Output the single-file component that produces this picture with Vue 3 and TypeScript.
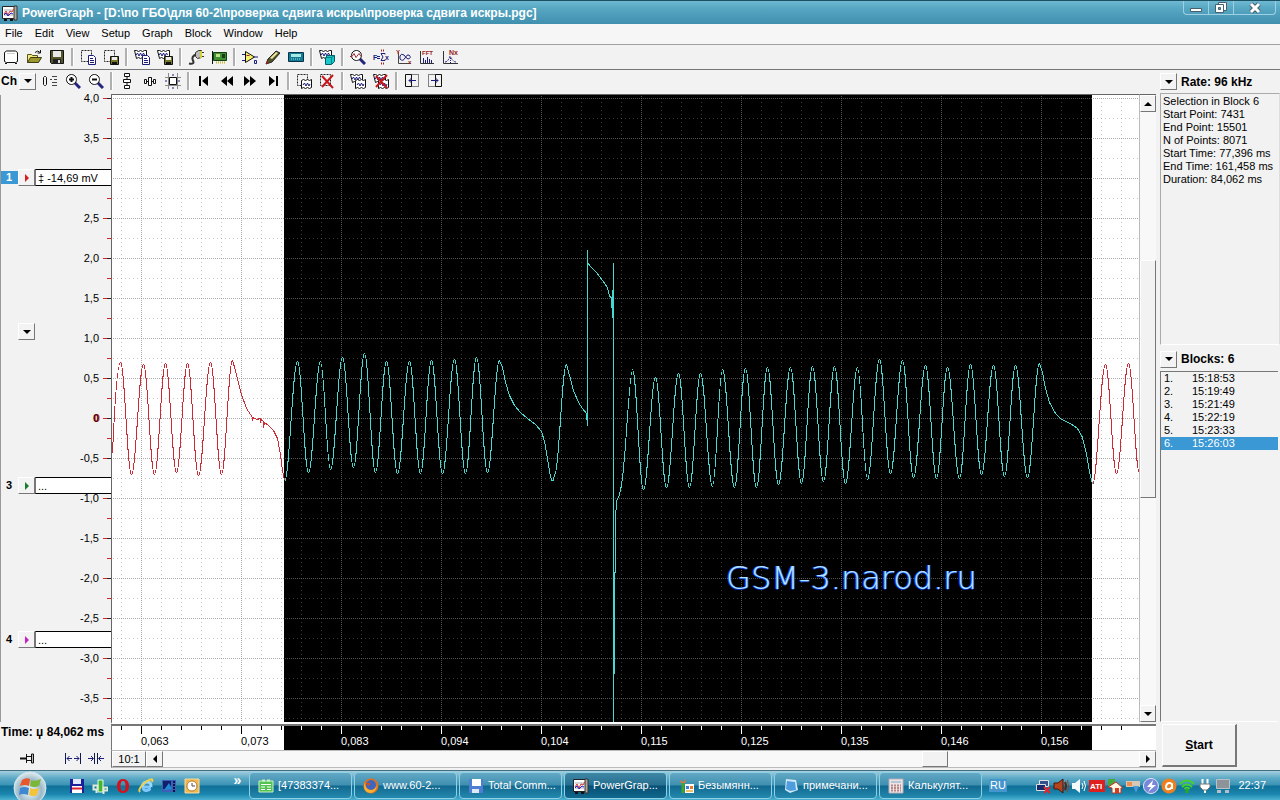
<script setup lang="ts">
import { h, ref } from 'vue'

type Shape = { d?: string; f?: string; s?: string; w?: number; dash?: string; t?: string; x?: number; y?: number; z?: number }

const K = '#111'
const NAVY = '#1c1c7a'
const dashedBox: Shape = { d: 'M1.5 1.5h10v11h-10z', s: '#222', dash: '2 1' }
const smallPage: Shape[] = [
  { d: 'M8.5 6.5h5l2 2v7h-7z', f: '#fff', s: NAVY },
  { d: 'M10 9.5h3M10 11.5h4M10 13.5h4', s: NAVY },
]
const smallDisk: Shape[] = [
  { d: 'M7.5 7.5h8v8h-8z', f: '#77772c', s: K },
  { d: 'M9 8h5v3H9z', f: '#eee' },
  { d: 'M9 13h5v3H9z', f: K },
]
const waves: Shape[] = [
  { d: 'M.5 1.5h2l2 1 2-1 2 1 2-1h2v8h-2l-2-1-2 1-2-1-2 1z', f: '#fff', s: K },
  { d: 'M2 6l1.500-2L5 7l1.500-3L8 7l1.500-3 1 2', s: NAVY },
]
const waveFront: Shape[] = [
  { d: 'M5.5 7.5l2-1 2 1 2-1 2 1 2-1v8l-2 1-2-1-2 1-2-1-2 1z', f: '#fff', s: K },
  { d: 'M7 12l1.5-2 1.5 3 1.5-3 1.5 3 1-2', s: NAVY },
]
const redCross: Shape = { d: 'M3 3l11 12M14 2L3 14', s: '#c8161d', w: 2 }
const lens: Shape[] = [
  { d: 'M10 10l5 5', s: '#25257f', w: 3 },
  { d: 'M6.5 1.5a5 5 0 1 1-.1 0z', f: '#fff', s: K },
]
const chart: Shape[] = [
  { d: 'M.5 1.5h13v12H.5z', f: '#fff', s: '#222' },
  { d: 'M12 1h3v14h-3z', f: '#b0a79b', s: '#333' },
  { d: 'M2 5h9M2 10h9', s: '#aaa' },
  { d: 'M2 9l2-3 2 4 2-4 2 1 2-3', s: '#c33' },
  { d: 'M2 10l2-2 2 3 3-3 2 1', s: '#22c' },
  { d: 'M2 15h3M8 15h3', s: K, w: 2 },
]

const icons: Record<string, Shape[]> = {
  new: [{ d: 'M1.5 3.5l2-1.500h9l2 1.500v9l-2 1h-9l-2-1z', f: '#fff', s: K, w: 1 }, { d: 'M2 14.500h2M12 14.500h2', s: K }, { d: 'M4 4.500h8', s: '#ccc' }],
  open: [
    { d: 'M1.500 13.500v-8h4l1 1h5v3', f: '#f3e97a', s: '#55551a' },
    { d: 'M1.500 13.500l3-5h11l-3 5z', f: '#9c982f', s: '#3d3d10' },
    { d: 'M9 3.500q3-3 5 0M14.500 1v3h-3', s: K },
  ],
  save: [
    { d: 'M1.500 1.500h13v13h-12l-1-1z', f: '#55552a', s: K },
    { d: 'M4 2h8v6H4z', f: '#e8e8e8' },
    { d: 'M4 10h8v5H4z', f: '#222' },
    { d: 'M9 11h2v3H9z', f: '#ddd' },
  ],
  copyPage: [dashedBox, ...smallPage],
  copyDisk: [dashedBox, ...smallDisk],
  wavePage: [...waves, ...smallPage],
  waveDisk: [...waves, ...smallDisk],
  plug: [
    { d: 'M1 14.500q6 1 4-3t3-6', s: '#333', w: 2 },
    { d: 'M7.500 3.500l3-2h3v7l-4 1-2-2z', f: '#bbb', s: '#333' },
    { d: 'M12 2h2v7h-2z', f: '#d6d232' },
    { d: 'M14 3.500h2M14 7.500h2', s: '#333' },
  ],
  board: [
    { d: 'M1.500 2v13', s: K },
    { d: 'M2.500 3.500h13v8h-13z', f: '#3f8f33', s: '#153f12' },
    { d: 'M5 5h4v3H5z', f: '#c3e08c' },
    { d: 'M11 5h3v4h-3z', f: '#183c17' },
    { d: 'M5 13.500h9', s: '#c5b62b', w: 2, dash: '1 1' },
  ],
  amp: [
    { d: 'M3.500 2.500l9 5.500-9 5.500z', f: '#f7f06a', s: K },
    { d: 'M0 5.500h3M0 11.500h3M12 8h4', s: NAVY },
    { d: 'M4.500 6.500h3', s: '#922' },
    { d: 'M12.500 11.500h2v3h-2z', s: NAVY },
  ],
  pencil: [
    { d: 'M1 15l2-5 8-8 4 2-8 9z', f: '#55532a', s: '#222' },
    { d: 'M5 9l6-6 2 1-6 6z', f: '#eee49a' },
    { d: 'M1 15l1-3 2 2z', f: '#a22' },
  ],
  device: [
    { d: 'M.5 3.500h15v9H.5z', f: '#137b91', s: '#08324b' },
    { d: 'M3 5h10v3H3z', f: '#a6e9e5' },
    { d: 'M3 10h10', s: '#9de', dash: '1 1' },
  ],
  cube: [...waves, { d: 'M6.500 8.500l2-2h7v6l-3 3h-6z', f: '#19c7cd', s: '#075a66' }, { d: 'M7 8.500h5.500V15M12.500 8.500l3-2', s: '#087' }],
  lensWave: [...lens, { d: 'M0 7.500h2l2-3 2 4 3-4 2 3', s: '#a22735' }],
  sum: [
    { t: 'F', x: 0, y: 11, z: 7, f: NAVY },
    { d: 'M4 7.500h3M4 9.500h3', s: NAVY },
    { d: 'M12 5.500v-1H8l2 3.500-2 3.500h4v-1', s: NAVY },
    { t: 'x', x: 12, y: 11, z: 7, f: NAVY },
    { d: 'M8 1.500h4M8 14.500h4', s: '#a22', w: 2, dash: '1 1' },
  ],
  xy: [
    { d: 'M2.500 3v11.500H15', s: '#444' },
    { d: 'M4 10q3 3 5-1t4-3q3 3-1 4-2-1-4-4-3-2-4 1z', s: NAVY },
    { t: 'Y', x: 0, y: 5, z: 6, f: '#922' },
    { t: 'x', x: 12, y: 15, z: 6, f: '#922' },
  ],
  fft: [
    { d: 'M1.500 2v12.500H15', s: '#333' },
    { t: 'FFT', x: 3, y: 6, z: 6, f: '#922' },
    { d: 'M4.500 9v5M6.500 11v3M8.500 8v6M10.500 10v4M12.500 11v3', s: NAVY },
  ],
  nx: [
    { d: 'M1.500 2v12.500H16', s: '#333' },
    { t: 'Nx', x: 7, y: 6, z: 7, f: '#922' },
    { d: 'M3 13q3 0 5-6 3 6 6 6', s: NAVY, dash: '2 1' },
    { d: 'M8.500 9v5', s: NAVY, dash: '1 1' },
  ],
  zero: [
    { d: 'M2.500 3.500h1l1 1v7l-1 1h-1l-1-1v-7z', s: K },
    { d: 'M10 3.500h5M8 6.500h2M12 6.500h3M10 9.500h5M10 12.500h5', s: '#444' },
  ],
  zoomIn: [...lens, { d: 'M4 6.500h5M6.500 4v5', s: K, w: 2 }],
  zoomOut: [...lens, { d: 'M4 6.500h5', s: K, w: 2 }],
  fitV: [{ d: 'M5.500.5h5v3h-5zM4.500 6.500h7v3h-7zM5.500 12.500h5v3h-5z', f: '#fff', s: K }, { d: 'M8 3v3M8 10v2', s: K }],
  fitH: [{ d: 'M6.500 4.500h3v8h-3z', f: '#fff', s: K }, { d: 'M2.500 6.500h2v4h-2zM11.500 6.500h2v4h-2z', f: '#fff', s: K }, { d: 'M4 8.500h2M10 8.500h2', s: K }],
  fitBox: [{ d: 'M3.500 0v16M12.500 0v16M0 4.500h16M0 12.500h16', s: '#8a8a8a' }, { d: 'M4.500 4.500h7v7h-7z', f: '#fff', s: K }, { d: 'M8 1v2M8 14v2M0 8h2M13 8h2', s: NAVY }],
  first: [{ d: 'M3 3h2v10H3zM12 3v10L6 8z', f: '#000' }],
  back: [{ d: 'M8 3v10L2 8zM14 3v10L8 8z', f: '#000' }],
  forward: [{ d: 'M2 3v10l6-5zM8 3v10l6-5z', f: '#000' }],
  last: [{ d: 'M4 3v10l6-5zM11 3h2v10h-2z', f: '#000' }],
  selWave: [dashedBox, ...waveFront],
  selCross: [dashedBox, redCross],
  twoWaves: [...waves, ...waveFront],
  waveCross: [...waves, ...waveFront, redCross],
  boxLeft: [{ d: 'M1.500 1.500h6v12h-6z', s: K }, { d: 'M7.500 1.500h7v12h-7z', s: K, dash: '1 1' }, { d: 'M12 7.500H5M7.500 5L5 7.500 7.500 10', s: NAVY }],
  boxRight: [{ d: 'M8.500 1.500h6v12h-6z', s: K }, { d: 'M1.500 1.500h7v12h-7z', s: K, dash: '1 1' }, { d: 'M4 7.500h7M8.500 5L11 7.500 8.500 10', s: NAVY }],
  pin: [{ d: 'M0 8.500h6', s: K, w: 2 }, { d: 'M6.500 4v9M7 6.500h5M7 10.500h5M13.500 4v9h-2v-9z', f: '#bbb', s: K }],
  spread: [{ d: 'M.5 3v11M15.500 3v11', s: '#111a4a' }, { d: 'M2 8.500h5M4.500 6L2 8.500 4.500 11M9 8.500h5M11.500 6L14 8.500 11.500 11', s: NAVY }],
  shrink: [{ d: 'M6.500 3v11M9.500 3v11', s: '#111a4a' }, { d: 'M0 8.500h5M3 6l2.500 2.500L3 11M16 8.500h-5M13 6l-2.500 2.500L13 11', s: NAVY }],
  chart,
  tcDisk: [{ d: 'M1 1h14v14H1z', f: '#1a1f9c' }, { d: 'M4 1h8v5H4z', f: '#dfe6ff' }, { d: 'M3 8h10v7H3z', f: '#fff' }, { d: 'M3 10.500h10', s: '#d23', w: 2 }],
  qip: [{ d: 'M6 2h5v12H6z', f: '#46b52e', s: '#dfe' }, { d: 'M1.500 7.500h4v4h-4zM4.500 12v3M11.500 9.500h4v3h-4zM11.500 13v3', s: '#dfead8', w: 2 }],
  opera: [{ d: 'M8 1c4 0 6 3 6 7s-2 7-6 7-6-3-6-7 2-7 6-7zM8 3c-2 0-2.500 2-2.500 5S6 13 8 13s2.500-2 2.500-5S10 3 8 3z', f: '#d3121b' }],
  ie: [{ d: 'M13 9H5q0 4 4 3.500 2 0 3-2', s: '#7cc8ff', w: 3 }, { d: 'M4.500 9q0-5 4.500-5t4 5', s: '#9ad8ff', w: 3 }, { d: 'M2 14Q-1 11 9 3q7-4 5 1', s: '#f0cf49', w: 2 }],
  movie: [{ d: 'M1 2h14v12H1z', f: '#3d5fb5' }, { d: 'M2 3h8v8H2z', f: '#12206b' }, { d: 'M3 12l5-7 3 6', f: '#1c8cd3' }, { d: 'M13 3v11', s: '#0b1642', w: 2, dash: '2 1' }],
  clock: [{ d: 'M1 1h14v14H1z', f: '#f3b54c', s: '#f9dca3' }, { d: 'M8 3a5 5 0 1 1-.1 0z', f: '#fff', s: '#a8762b' }, { d: 'M8 5v3h3', s: '#644' }],
  greenNote: [{ d: 'M1 3h14v11H1z', f: '#53c451', s: '#c9f4c3' }, { d: 'M4 2.500h3M9 2.500h3', s: '#c9f4c3', w: 2 }, { d: 'M3 6.500h10M3 9h4M9 9h4M3 11.500h4M9 11.500h4', s: '#fff' }],
  firefox: [{ d: 'M8 .5a7.500 7.500 0 1 1-.1 0z', f: '#e0701b' }, { d: 'M8 2a5 5 0 1 1-.1 0z', f: '#3c66c4' }, { d: 'M2 4q0 8 6 8 4 0 6-5-1 8-7 8-6-1-6-7z', f: '#f9b233' }, { d: 'M3 5q3-1 5 1l-3 2z', f: '#d2501a' }],
  floppy: [{ d: 'M1 1h14v14H1z', f: '#4d7ed2' }, { d: 'M4 1h9v7H4z', f: '#fff' }, { d: 'M4 11h7v4H4z', f: '#dfe8f7' }],
  paint: [{ d: 'M5 5v10', s: '#3fa532', w: 3 }, { d: 'M2 2l3 2 3-3-1 4H3z', f: '#e8772d' }, { d: 'M7 6h9v9H7z', f: '#fff' }, { d: 'M8 8h3v3H8z', f: '#3e7ad7' }, { d: 'M12 8h3v3h-3z', f: '#e9782d' }, { d: 'M8 12h7v2H8z', f: '#f0c069' }],
  notes: [{ d: 'M3 1l10 1 2 10-8 3-5-3z', f: '#cfeaf8' }, { d: 'M4 3l8 1 1 8-6 1-4-2z', f: '#4f9dde' }],
  calc: [{ d: 'M1 1h14v14H1z', f: '#ece5e5', s: '#b9aebb' }, { d: 'M3 3h10v2H3z', f: '#b9c3d6' }, { d: 'M3 7.500h10M3 10h10M3 12.500h10', s: '#b98484', w: 2, dash: '2 1' }],
  net: [{ d: 'M4.500 2.500h9v6h-9z', f: '#36508c', s: '#e4e4e4' }, { d: 'M1.500 6.500h9v6h-9z', f: '#142a6b', s: '#dcdcdc' }, { d: 'M9 9l6 6M15 9l-6 6', s: '#e3242b', w: 2 }],
  speaker: [{ d: 'M1 5h4l5-4v14l-5-4H1z', f: '#b5431c', s: '#4b1608' }, { d: 'M12 4q2 4 0 8', s: '#5d2313', w: 2 }, { d: 'M14.500 2q2 6 0 12', s: '#8b4a36' }],
  volume: [{ d: 'M1 5h3l5-4v14l-5-4H1z', f: '#f4fafc' }, { d: 'M11 5q2 3 0 6M13 3q3 5 0 10', s: '#fff' }],
  ati: [{ d: 'M0 2h16v12H0z', f: '#de1f1d' }, { t: 'ATI', x: 1, y: 11, z: 8, f: '#fff' }],
  house: [{ d: 'M1 1h7v7H1z', f: '#4aa63b' }, { d: 'M1 9l8-5 7 6h-2v5H5v-5z', f: '#fff7e3', s: '#c13225' }, { d: 'M8 10h4v5H8z', f: '#d23c25' }],
  update: [{ d: 'M1 3h14v6H1z', f: '#d6c8b6' }, { d: 'M2 4h5v4H2z', f: '#f08d51' }, { d: 'M8 8h6l-3 7z', f: '#4a97dc' }],
  bolt: [{ d: 'M8 .5a7.500 7.500 0 1 1-.1 0z', f: '#7887d8', s: '#e0e5fa' }, { d: 'M10 2L4 9h4l-3 5 8-7H9z', f: '#fff' }],
  avast: [{ d: 'M8 .5a7.500 7.500 0 1 1-.1 0z', f: '#ee7f1e' }, { d: 'M11 11V6q-3-2-5 0-2 3 0 5 3 1 5-2', s: '#fff', w: 2 }],
  wifi: [{ d: 'M1 6q7-7 14 0M3 9q5-5 10 0M5.500 11q2.500-3 5 0', s: '#43d12d', w: 2 }, { d: 'M8 11v4', s: '#2caa1d', w: 3 }],
  socket: [{ d: 'M5.500 1v5M10.500 1v5M8 11v4', s: '#fff', w: 2 }, { d: 'M3 6h10v3l-3 3H6L3 9z', f: '#fff', s: '#777' }],
  display: [{ d: 'M1.500 1.500h13v9h-13z', f: '#8d9499', s: '#b9c2c8' }, { d: 'M2 12h4v3H2zM10 12h4v3h-4z', f: '#b5bfc5' }],
}

const Icon = (props: { name: string }) =>
  h(
    'svg',
    { class: 'icon', viewBox: '0 0 16 16', width: 16, height: 16, 'aria-hidden': 'true' },
    icons[props.name].map((s) =>
      s.t
        ? h('text', { x: s.x, y: s.y, 'font-size': s.z, 'font-weight': 'bold', fill: s.f }, s.t)
        : h('path', { d: s.d, fill: s.f ?? 'none', stroke: s.s, 'stroke-width': s.w ?? 1, 'stroke-dasharray': s.dash }),
    ),
  )
Icon.props = ['name']

const menus = ['File', 'Edit', 'View', 'Setup', 'Graph', 'Block', 'Window', 'Help']
const mainTools = [
  ['new', 'open', 'save'],
  ['copyPage', 'copyDisk'],
  ['wavePage', 'waveDisk'],
  ['plug', 'board'],
  ['amp', 'pencil', 'device'],
  ['cube'],
  ['lensWave', 'sum', 'xy', 'fft', 'nx'],
]
const viewTools = [
  ['zero', 'zoomIn', 'zoomOut'],
  ['fitV', 'fitH', 'fitBox'],
  ['first', 'back', 'forward', 'last'],
  ['selWave', 'selCross'],
  ['twoWaves', 'waveCross'],
  ['boxLeft', 'boxRight'],
]

const W = 1027
const H = 627
const X0 = 112
const Y0 = 95
const px = (x: number) => `${((x - X0) / W) * 100}%`
const py = (y: number) => `${((y - Y0) / H) * 100}%`

const levels = Array.from({ length: 16 }, (_, i) => {
  const value = 4 - i * 0.5
  return { y: 98 + i * 40, label: value === 0 ? '0' : value.toFixed(1).replace('.', ','), zero: value === 0 }
})
const minorY = Array.from({ length: 16 }, (_, i) => 118 + i * 40)
const majorX = Array.from({ length: 10 }, (_, i) => 141 + i * 100)
const minorX = Array.from({ length: 51 }, (_, i) => 121 + i * 20).filter((x) => (x - 141) % 100 !== 0)
const times = ['0,063', '0,073', '0,083', '0,094', '0,104', '0,115', '0,125', '0,135', '0,146', '0,156']

type Pt = [number, number]
const wave = (pts: Pt[]) =>
  pts
    .slice(1)
    .map(([x, y], i) => {
      const [a, b] = pts[i]
      const k = (x - a) * 0.38
      return `C${a + k} ${b} ${x - k} ${y} ${x} ${y}`
    })
    .join('')
const line = (pts: Pt[]) => pts.map(([x, y]) => `L${x} ${y}`).join('')

const redLeft =
  'M112 453Q116 362 120 362' +
  wave([[120, 362], [131, 474], [143, 364], [154, 474], [165, 363], [176, 472], [187, 363], [198, 475], [210, 362], [221, 474], [232, 360]]) +
  line([[235, 370], [238, 383], [241, 394], [246, 408], [252, 417], [252, 420], [253, 417], [256, 419], [260, 418], [260, 422], [261, 419], [263, 421], [263, 427], [264, 422], [268, 425], [273, 430], [277, 438], [280, 454], [282, 470], [284, 480]])
const redRight = 'M1092 484' + wave([[1092, 484], [1105, 364], [1116, 473], [1128, 363], [1139, 473]])
const cyan =
  'M284 481' +
  wave([[284, 481], [297, 361], [308, 472], [320, 361], [330, 469], [342, 357], [353, 467], [364, 353], [375, 472], [386, 361], [397, 473], [409, 361], [420, 473], [431, 360], [442, 473], [454, 359], [465, 473], [476, 357], [487, 472], [499, 360]]) +
  line([[502, 367], [505, 382], [509, 395], [514, 405], [520, 412], [527, 418], [535, 424], [541, 431], [544, 441], [547, 458], [549, 471]]) +
  'Q552 488 554 474' +
  wave([[554, 474], [566, 364]]) +
  line([[569, 375], [573, 390], [578, 402], [582, 408], [586, 413], [587, 425], [587, 249], [587, 262], [590, 266], [596, 272], [602, 280], [607, 287], [609, 296], [611, 297], [612, 317], [612, 290], [613, 317], [613, 262], [613, 722], [614, 626], [615, 520], [616, 500], [618, 497], [620, 490], [622, 478], [625, 445]]) +
  'Q630 369 632 369' +
  wave([[632, 369], [643, 489], [655, 377], [666, 487], [678, 373], [689, 487], [700, 373], [712, 486], [722, 369], [734, 487], [745, 368], [756, 487], [767, 367], [778, 484], [790, 367], [801, 483], [812, 366], [823, 481], [834, 366], [845, 483], [857, 367], [867, 479], [879, 359], [890, 473], [902, 360], [913, 477], [925, 365], [936, 478], [947, 367], [959, 478], [970, 364], [981, 474], [993, 365], [1004, 476], [1015, 365], [1027, 477], [1039, 363]]) +
  line([[1042, 372], [1045, 388], [1049, 402], [1055, 413], [1061, 419], [1070, 423], [1077, 428], [1082, 437], [1086, 453], [1089, 471], [1092, 484]])

const channels = [
  { no: 1, y: 177, color: '#d61c1c', value: '‡ -14,69 mV' },
  { no: 3, y: 485, color: '#187d2c', value: '...' },
  { no: 4, y: 639, color: '#c420c8', value: '...' },
]
const activeChannel = ref(1)

const info = [
  'Selection in Block 6',
  'Start Point: 7431',
  'End Point: 15501',
  'N of Points: 8071',
  'Start Time: 77,396 ms',
  'End Time: 161,458 ms',
  'Duration: 84,062 ms',
]
const blocks = ['15:18:53', '15:19:49', '15:21:49', '15:22:19', '15:23:33', '15:26:03']
const activeBlock = ref(5)

const quick = ['tcDisk', 'qip', 'opera', 'ie', 'movie', 'clock']
const tasks = [
  { icon: 'greenNote', text: '[47383374...' },
  { icon: 'firefox', text: 'www.60-2...' },
  { icon: 'floppy', text: 'Total Comm...' },
  { icon: 'chart', text: 'PowerGrap...', active: true },
  { icon: 'paint', text: 'Безымянн...' },
  { icon: 'notes', text: 'примечани...' },
  { icon: 'calc', text: 'Калькулят...' },
]
const tray = ['net', 'speaker', 'volume', 'ati', 'house', 'update', 'bolt', 'avast', 'wifi', 'socket', 'display']
</script>

<template>
  <div class="desktop">
    <header class="title">
      <Icon name="chart" />
      <h1>PowerGraph - [D:\по ГБО\для 60-2\проверка сдвига искры\проверка сдвига искры.pgc]</h1>
      <div class="win-buttons">
        <button aria-label="Minimize">
          <svg viewBox="0 0 14 12" width="14" height="12"><path d="M1.500 6.500h11v3h-11z" fill="#fff" stroke="#47606e" /></svg>
        </button>
        <button aria-label="Restore">
          <svg viewBox="0 0 14 12" width="14" height="12">
            <path d="M4.500.5h8v8h-8z" fill="#fff" stroke="#47606e" />
            <path d="M1.500 2.500h8v8h-8z" fill="#fff" stroke="#47606e" />
            <path d="M4.500 5.500h2v2h-2z" fill="#5aa5c0" stroke="#47606e" />
          </svg>
        </button>
        <button class="close" aria-label="Close">
          <svg viewBox="0 0 14 12" width="14" height="12">
            <path d="M3 2l8 8M11 2l-8 8" stroke="#47606e" stroke-width="5" />
            <path d="M3 2l8 8M11 2l-8 8" stroke="#fff" stroke-width="3" />
          </svg>
        </button>
      </div>
    </header>

    <nav class="menu">
      <button v-for="m in menus" :key="m">{{ m }}</button>
    </nav>

    <div class="tools main-tools">
      <div v-for="(group, i) in mainTools" :key="i" class="group">
        <button v-for="t in group" :key="t" :aria-label="t"><Icon :name="t" /></button>
      </div>
    </div>

    <div class="body">
      <main class="work">
        <div class="tools view-tools">
          <b class="ch">Ch</b>
          <button class="raised" aria-label="Channel menu"><i class="arrow down"></i></button>
          <div v-for="(group, i) in viewTools" :key="i" class="group">
            <button v-for="t in group" :key="t" :aria-label="t"><Icon :name="t" /></button>
          </div>
        </div>

        <section class="axis">
          <svg class="scale" :viewBox="`0 ${Y0} 8 ${H}`" preserveAspectRatio="none" shape-rendering="crispEdges">
            <g v-for="l in levels" :key="l.y">
              <path :d="`M0 ${l.y + 0.5}h8`" stroke="#d22" />
              <path :d="`M4 ${l.y + 0.5}h4`" stroke="#222" />
            </g>
            <path v-for="y in minorY" :key="y" :d="`M4 ${y + 0.5}h4`" stroke="#d22" />
          </svg>
          <span v-for="l in levels" :key="l.y" class="level" :class="{ zero: l.zero }" :style="{ top: py(l.y) }">{{ l.label }}</span>
          <button class="raised axis-menu" aria-label="Axis menu" :style="{ top: py(331) }"><i class="arrow down"></i></button>
          <div v-for="c in channels" :key="c.no" class="channel" :style="{ top: py(c.y) }">
            <label :for="`channel-${c.no}`" :class="{ active: c.no === activeChannel }">{{ c.no }}</label>
            <button class="raised" :aria-label="`Channel ${c.no}`" @click="activeChannel = c.no">
              <i class="arrow right" :style="{ color: c.color }"></i>
            </button>
            <input :id="`channel-${c.no}`" type="text" :value="c.value" readonly />
          </div>
        </section>

        <section class="plot">
          <svg :viewBox="`${X0} ${Y0} ${W} ${H}`" preserveAspectRatio="none">
            <rect :x="X0" :y="Y0" :width="W" :height="H" fill="#fff" />
            <rect x="284" :y="Y0" width="808" :height="H" fill="#000" />
            <g class="minor">
              <path v-for="y in minorY" :key="`h${y}`" :d="`M${X0 + 1} ${y + 0.5}H${X0 + W}`" />
              <path v-for="x in minorX" :key="`v${x}`" :d="`M${x + 0.5} ${Y0 + 3}V${Y0 + H}`" />
            </g>
            <g class="major">
              <path v-for="l in levels" :key="`h${l.y}`" :d="`M${X0 + 1} ${l.y + 0.5}H${X0 + W}`" />
              <path v-for="x in majorX" :key="`v${x}`" :d="`M${x + 0.5} ${Y0 + 1}V${Y0 + H}`" />
            </g>
            <g transform="translate(.5 .5)">
              <path class="trace red" :d="redLeft" />
              <path class="trace red" :d="redRight" />
              <path class="trace cyan" :d="cyan" />
            </g>
          </svg>
          <span class="watermark">GSM-3.narod.ru</span>
        </section>

        <div class="vscroll">
          <button class="raised" aria-label="Scroll up"><i class="arrow up"></i></button>
          <span class="v-before"></span>
          <span class="thumb v-thumb"></span>
          <span class="v-after"></span>
          <button class="raised" aria-label="Scroll down"><i class="arrow down"></i></button>
        </div>

        <div class="span-label">Time: џ 84,062 ms</div>
        <div class="ruler">
          <svg :viewBox="`${X0} 0 ${W} 24`" preserveAspectRatio="none" shape-rendering="crispEdges">
            <rect x="284" y="0" width="808" height="24" fill="#000" />
            <path v-for="x in majorX" :key="x" :d="`M${x + 0.5} 0v8`" :stroke="x > 284 && x < 1092 ? '#fff' : '#000'" />
            <path v-for="x in minorX" :key="x" :d="`M${x + 0.5} 0v4`" :stroke="x > 284 && x < 1092 ? '#fff' : '#000'" />
          </svg>
          <span v-for="(t, i) in times" :key="t" :class="{ light: i > 1 }" :style="{ left: px(majorX[i]) }">{{ t }}</span>
        </div>
        <div class="ruler-end"></div>

        <div class="fit">
          <button aria-label="Pin"><Icon name="pin" /></button>
          <button class="push" aria-label="Expand"><Icon name="spread" /></button>
          <button aria-label="Compress"><Icon name="shrink" /></button>
        </div>
        <div class="hscroll">
          <button class="raised ratio">10:1</button>
          <button class="raised" aria-label="Scroll left"><i class="arrow left"></i></button>
          <span class="h-before"></span>
          <span class="thumb h-thumb"></span>
          <span class="h-after"></span>
          <button class="raised" aria-label="Scroll right"><i class="arrow right"></i></button>
        </div>
      </main>

      <aside class="side">
        <div class="side-head">
          <button class="raised" aria-label="Rate menu"><i class="arrow down"></i></button>
          <h2>Rate: 96 kHz</h2>
        </div>
        <div class="info">
          <p v-for="row in info" :key="row">{{ row }}</p>
        </div>
        <div class="side-head second">
          <button class="raised" aria-label="Blocks menu"><i class="arrow down"></i></button>
          <h2>Blocks: 6</h2>
        </div>
        <ul class="blocks" role="listbox" aria-label="Blocks">
          <li v-for="(b, i) in blocks" :key="b" role="option" :aria-selected="i === activeBlock" @click="activeBlock = i">
            <span>{{ i + 1 }}.</span><span>{{ b }}</span>
          </li>
        </ul>
        <button class="start"><u>S</u>tart</button>
      </aside>
    </div>

    <footer class="taskbar">
      <button class="orb" aria-label="Start menu">
        <svg viewBox="0 0 36 30" width="36" height="30">
          <defs>
            <radialGradient id="orb" cx="50%" cy="60%" r="60%">
              <stop offset="0" stop-color="#f4fbff" />
              <stop offset=".6" stop-color="#9bb9c9" />
              <stop offset="1" stop-color="#e4edf1" />
            </radialGradient>
          </defs>
          <circle cx="18" cy="17" r="16" fill="url(#orb)" stroke="#d6e6ee" />
          <path d="M10 9q4-3 8-1l-1 7q-4-2-9 0z" fill="#e8562a" />
          <path d="M19 9q4 2 10-1l-2 7q-5 2-9 0z" fill="#7bb83a" />
          <path d="M8 17q4-2 9 0l-1 7q-5-2-9 0z" fill="#3f87d0" />
          <path d="M18 17q4 2 9 0l-2 7q-4 2-8 0z" fill="#f4c33c" />
        </svg>
      </button>
      <div class="quick">
        <button v-for="q in quick" :key="q" :aria-label="q"><Icon :name="q" /></button>
      </div>
      <button class="more" aria-label="More">»</button>
      <div class="tasks">
        <button v-for="t in tasks" :key="t.text" :class="{ active: t.active }"><Icon :name="t.icon" /><span>{{ t.text }}</span></button>
      </div>
      <span class="lang">RU</span>
      <div class="tray"><Icon v-for="t in tray" :key="t" :name="t" /></div>
      <time class="time">22:37</time>
    </footer>
  </div>
</template>

<style>
body {
  margin: 0;
}
</style>

<style scoped>
* {
  box-sizing: border-box;
}
.desktop {
  display: flex;
  flex-direction: column;
  height: 100vh;
  background: #f2f2f2;
  color: #000;
  font: 11px/13px "Liberation Sans", Arial, sans-serif;
  overflow: hidden;
}
button,
input {
  font: inherit;
  color: inherit;
  margin: 0;
  padding: 0;
  border: 0;
  border-radius: 0;
  background: none;
}
.icon {
  display: block;
  flex: none;
}
.title {
  flex: none;
  display: flex;
  align-items: center;
  gap: 4px;
  height: 24px;
  padding: 0 4px 0 2px;
  border-top: 1px solid #1d4f62;
  background: linear-gradient(#6fb9d2, #58a8c4 30%, #3f8fae);
}
h1 {
  flex: 1;
  margin: 0;
  color: #fff;
  font-size: 12px;
  line-height: 16px;
  white-space: nowrap;
  overflow: hidden;
}
.win-buttons {
  align-self: flex-start;
  display: flex;
  height: 14px;
  border: 1px solid #9cd0e2;
  border-top: 0;
  border-radius: 0 0 4px 4px;
}
.win-buttons button {
  display: flex;
  align-items: center;
  justify-content: center;
  width: 25px;
  border-right: 1px solid #9cd0e2;
}
.win-buttons .close {
  width: 41px;
  border-right: 0;
}
.menu {
  flex: none;
  display: flex;
  gap: 12px;
  height: 21px;
  padding: 0 5px 2px;
  background: #f6f6f6;
  border-bottom: 1px solid #a0a0a0;
}
.tools {
  display: flex;
  align-items: center;
}
.main-tools {
  flex: none;
  height: 25px;
  border-bottom: 1px solid #777;
}
.view-tools {
  grid-column: 1 / -1;
  padding-bottom: 2px;
}
.group {
  display: flex;
  align-items: center;
}
.group + .group::before {
  content: "";
  width: 2px;
  height: 18px;
  margin: 0 3px 0 2px;
  background: #b0b0b0;
  border-right: 1px solid #fff;
}
.group button {
  padding: 0 4px 0 3px;
}
.ch {
  width: 19px;
  padding-left: 1px;
  font-size: 12px;
}
.raised {
  flex: none;
  display: flex;
  align-items: center;
  justify-content: center;
  width: 17px;
  height: 17px;
  background: #f3f3f3;
  border: 1px solid #fff;
  border-right-color: #777;
  border-bottom-color: #777;
}
.view-tools > .raised {
  margin-right: 3px;
}
.arrow {
  width: 0;
  height: 0;
  border: 4px solid transparent;
}
.arrow.down {
  border-top-color: currentColor;
  border-bottom-width: 0;
}
.arrow.up {
  border-bottom-color: currentColor;
  border-top-width: 0;
}
.arrow.right {
  border-left-color: currentColor;
  border-right-width: 0;
}
.arrow.left {
  border-right-color: currentColor;
  border-left-width: 0;
}
.body {
  flex: 1;
  min-height: 0;
  display: flex;
  gap: 4px;
}
.work {
  flex: 1;
  min-width: 0;
  display: grid;
  grid-template-columns: 111px minmax(0, 1fr) 17px;
  grid-template-rows: 24px minmax(0, 1fr) 26px 20px;
}
.axis {
  position: relative;
  margin: 1px 0 2px;
  border-left: 1px solid #999;
}
.scale {
  display: block;
  width: 8px;
  height: 100%;
  margin-left: auto;
}
.level {
  position: absolute;
  right: 12px;
  margin-top: -6px;
}
.zero {
  font-weight: bold;
  color: #500;
  text-shadow: 1px 0 #d66;
}
.axis-menu,
.channel {
  position: absolute;
  margin-top: -8px;
}
.axis-menu {
  left: 17px;
}
.channel {
  left: 0;
  right: 0;
  display: flex;
  align-items: center;
}
.channel label {
  width: 17px;
  padding-left: 5px;
  font-weight: bold;
}
.channel label.active {
  background: #3a98d4;
  color: #fff;
}
.channel input {
  flex: 1;
  min-width: 0;
  height: 17px;
  padding: 0 2px;
  background: #fff;
  border: 1px solid #000;
  border-right: 0;
  border-left-color: #777;
}
.plot {
  position: relative;
  border-top: 1px solid #666;
  border-left: 1px solid #666;
  border-bottom: 2px solid #fff;
}
.plot svg,
.ruler svg {
  display: block;
  width: 100%;
  height: 100%;
}
.major {
  stroke: #808080;
  stroke-opacity: 0.65;
  stroke-dasharray: 1 1;
}
.minor {
  stroke: #808080;
  stroke-opacity: 0.45;
  stroke-dasharray: 1 3;
}
.trace {
  fill: none;
  stroke-width: 1;
  shape-rendering: crispEdges;
}
.red {
  stroke: #cc2a34;
}
.cyan {
  stroke: #45d9d2;
}
.watermark {
  position: absolute;
  left: 72%;
  top: 77%;
  transform: translate(-50%, -50%);
  color: #b8e2ff;
  font: 200 32px/40px "DejaVu Sans", "DejaVu Sans Light", sans-serif;
  text-shadow: 1px 0 #0a50e8, -1px 0 #0a50e8, 0 1px #0636c0;
}
.vscroll {
  display: flex;
  flex-direction: column;
  margin: 0 0 2px;
  border-top: 1px solid #666;
  background: #f8f8f8;
  border-left: 1px solid #bbb;
}
.vscroll .raised {
  width: 16px;
}
.thumb {
  background: #f2f2f2;
  border: 1px solid #fff;
  border-right-color: #777;
  border-bottom-color: #777;
}
.v-before {
  flex: 148;
}
.v-thumb {
  flex: 237;
}
.v-after {
  flex: 208;
}
.span-label {
  padding: 2px 0 0 1px;
  font-size: 12px;
  font-weight: bold;
  white-space: nowrap;
}
.ruler {
  position: relative;
  border-top: 2px solid #777;
  border-left: 1px solid #777;
  background: #fff;
}
.ruler span {
  position: absolute;
  top: 9px;
}
.ruler .light {
  color: #fff;
}
.ruler-end {
  border-top: 2px solid #777;
  background: #fff;
}
.fit {
  display: flex;
  padding: 0 7px 4px 20px;
  align-items: center;
  gap: 7px;
}
.push {
  margin-left: auto;
}
.hscroll {
  grid-column: 2 / -1;
  display: flex;
  height: 18px;
  border-top: 1px solid #bbb;
  border-left: 1px solid #777;
  border-bottom: 1px solid #bbb;
  background: #f8f8f8;
}
.hscroll .raised {
  height: 16px;
}
.hscroll .ratio {
  width: 34px;
}
.h-before {
  flex: 762;
}
.h-thumb {
  flex: 24;
}
.h-after {
  flex: 192;
}
.side {
  flex: none;
  width: 120px;
  display: flex;
  flex-direction: column;
}
.side-head {
  flex: none;
  display: flex;
  align-items: center;
  gap: 4px;
  height: 23px;
}
.second {
  height: 26px;
  padding-top: 3px;
}
h2 {
  margin: 0;
  font-size: 12px;
  line-height: 14px;
}
.info {
  flex: 250;
  padding: 1px 2px;
  border: 1px solid #aaa;
  border-right-color: #ddd;
  border-bottom-color: #fff;
}
p {
  margin: 0;
  white-space: nowrap;
}
.blocks {
  flex: 353;
  margin: 0 2px 0 0;
  padding: 0;
  list-style: none;
  border: 1px solid #777;
  border-right: 0;
  border-bottom-color: #fff;
}
.blocks li {
  display: flex;
  padding-left: 3px;
}
.blocks li span:first-child {
  width: 28px;
}
.blocks li[aria-selected="true"] {
  background: #3a98d4;
  color: #fff;
}
.start {
  flex: none;
  width: 75px;
  height: 43px;
  margin: 2px 0 3px 2px;
  border: 1px solid #fff;
  border-right: 2px solid #777;
  border-bottom: 2px solid #777;
  font-weight: bold;
  font-size: 12px;
}
.taskbar {
  flex: none;
  display: flex;
  align-items: center;
  height: 30px;
  padding-right: 14px;
  border-top: 1px solid #3f6f80;
  background: linear-gradient(#a6cfdf, #5ba9c6 25%, #3b93b5 48%, #0f7098 52%, #1b86ae 80%, #4cb2d2);
  color: #fff;
}
.orb {
  width: 36px;
  height: 30px;
  margin: 0 20px 0 12px;
}
.quick {
  display: flex;
  gap: 7px;
  padding-left: 1px;
}
.quick button {
  width: 16px;
}
.more {
  margin: 0 6px 10px 32px;
  width: 11px;
  font-size: 14px;
  font-weight: bold;
}
.tasks {
  display: flex;
  flex: 0 1 733px;
  min-width: 0;
  gap: 2px;
}
.tasks button {
  flex: 1;
  min-width: 0;
  display: flex;
  align-items: center;
  gap: 4px;
  height: 27px;
  padding: 0 8px;
  border: 1px solid #8fd0e4;
  border-radius: 4px;
  background: linear-gradient(#62a9c5, #3f8fb0 48%, #11688f 52%, #2489ae);
  white-space: nowrap;
}
.tasks .active {
  background: linear-gradient(#3f87a5, #266f90 48%, #084f74 52%, #10688d);
}
.lang {
  margin-left: 7px;
  width: 18px;
  background: #4596cd;
  text-align: center;
}
.tray {
  display: flex;
  flex: none;
  gap: 2px;
  margin-left: auto;
}
.time {
  margin-left: 7px;
}
</style>
